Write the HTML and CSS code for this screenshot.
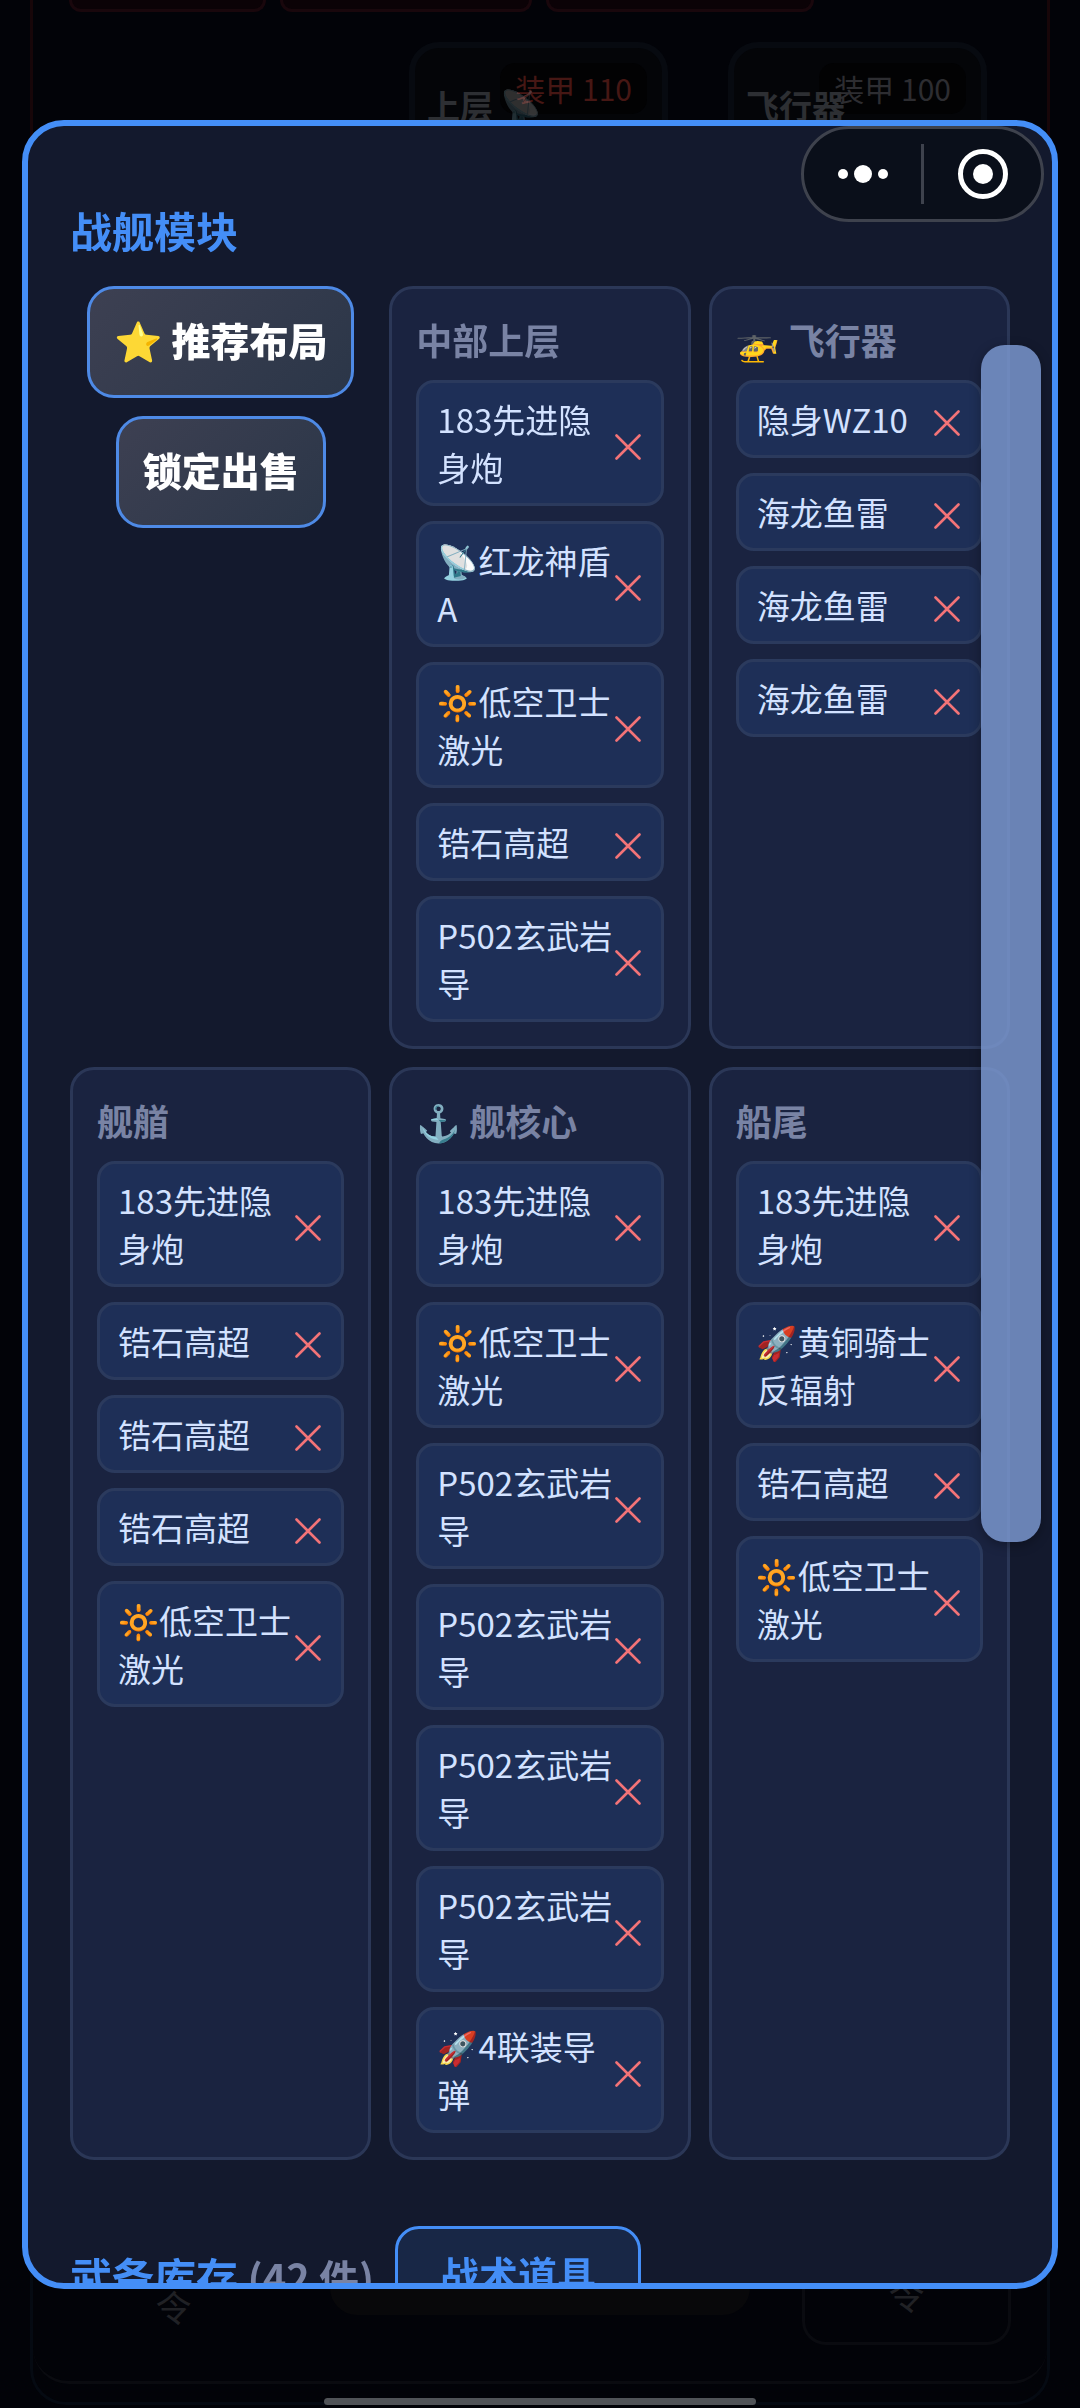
FILE: index.html
```html
<!DOCTYPE html>
<html lang="zh-CN">
<head>
	<meta charset="UTF-8">
	<meta name="viewport" content="width=device-width, initial-scale=1">
	<title>战舰模块</title>
	<link rel="stylesheet" href="styles.css">
</head>
<body>
	<svg class="defs" aria-hidden="true">
		<symbol id="i-x" viewBox="0 0 26 26">
			<path d="M1.5 1.5 24.5 24.5M24.5 1.5 1.5 24.5" fill="none" stroke="currentColor" stroke-width="2.6" stroke-linecap="round"/>
		</symbol>
	</svg>

	<!-- 战斗页面（被遮罩压暗） -->
	<div class="battle">
		<div class="enemy">
			<div class="chips"><span class="chip chip-s"></span><span class="chip chip-m"></span><span class="chip chip-l"></span></div>
			<div class="parts">
				<div class="part"><span class="armor hurt">装甲 110</span><b>上层 <span class="dim">📡</span></b></div>
				<div class="part"><span class="armor">装甲 100</span><b>飞行器</b></div>
			</div>
		</div>
		<div class="fleet">
			<div class="orders">
				<span class="order">令</span>
				<span class="order-mid"></span>
				<span class="order order-box">令</span>
			</div>
		</div>
	</div>

	<!-- 弹窗 -->
	<div class="mask">
		<div class="modal">
			<h2 class="title">战舰模块</h2>
			<div class="grid">
				<div class="actions">
					<button class="btn">⭐ 推荐布局</button>
					<button class="btn">锁定出售</button>
				</div>
				<div class="slot">
					<h3>中部上层</h3>
					<ul>
						<li><span>183先进隐身炮</span><button class="del" aria-label="移除"><svg><use href="#i-x"/></svg></button></li>
						<li><span>📡红龙神盾A</span><button class="del" aria-label="移除"><svg><use href="#i-x"/></svg></button></li>
						<li><span>🔆低空卫士激光</span><button class="del" aria-label="移除"><svg><use href="#i-x"/></svg></button></li>
						<li><span>锆石高超</span><button class="del" aria-label="移除"><svg><use href="#i-x"/></svg></button></li>
						<li><span>P502玄武岩导</span><button class="del" aria-label="移除"><svg><use href="#i-x"/></svg></button></li>
					</ul>
				</div>
				<div class="slot">
					<h3>🚁 飞行器</h3>
					<ul>
						<li><span>隐身WZ10</span><button class="del" aria-label="移除"><svg><use href="#i-x"/></svg></button></li>
						<li><span>海龙鱼雷</span><button class="del" aria-label="移除"><svg><use href="#i-x"/></svg></button></li>
						<li><span>海龙鱼雷</span><button class="del" aria-label="移除"><svg><use href="#i-x"/></svg></button></li>
						<li><span>海龙鱼雷</span><button class="del" aria-label="移除"><svg><use href="#i-x"/></svg></button></li>
					</ul>
				</div>
				<div class="slot">
					<h3>舰艏</h3>
					<ul>
						<li><span>183先进隐身炮</span><button class="del" aria-label="移除"><svg><use href="#i-x"/></svg></button></li>
						<li><span>锆石高超</span><button class="del" aria-label="移除"><svg><use href="#i-x"/></svg></button></li>
						<li><span>锆石高超</span><button class="del" aria-label="移除"><svg><use href="#i-x"/></svg></button></li>
						<li><span>锆石高超</span><button class="del" aria-label="移除"><svg><use href="#i-x"/></svg></button></li>
						<li><span>🔆低空卫士激光</span><button class="del" aria-label="移除"><svg><use href="#i-x"/></svg></button></li>
					</ul>
				</div>
				<div class="slot">
					<h3>⚓ 舰核心</h3>
					<ul>
						<li><span>183先进隐身炮</span><button class="del" aria-label="移除"><svg><use href="#i-x"/></svg></button></li>
						<li><span>🔆低空卫士激光</span><button class="del" aria-label="移除"><svg><use href="#i-x"/></svg></button></li>
						<li><span>P502玄武岩导</span><button class="del" aria-label="移除"><svg><use href="#i-x"/></svg></button></li>
						<li><span>P502玄武岩导</span><button class="del" aria-label="移除"><svg><use href="#i-x"/></svg></button></li>
						<li><span>P502玄武岩导</span><button class="del" aria-label="移除"><svg><use href="#i-x"/></svg></button></li>
						<li><span>P502玄武岩导</span><button class="del" aria-label="移除"><svg><use href="#i-x"/></svg></button></li>
						<li><span>🚀4联装导弹</span><button class="del" aria-label="移除"><svg><use href="#i-x"/></svg></button></li>
					</ul>
				</div>
				<div class="slot">
					<h3>船尾</h3>
					<ul>
						<li><span>183先进隐身炮</span><button class="del" aria-label="移除"><svg><use href="#i-x"/></svg></button></li>
						<li><span>🚀黄铜骑士反辐射</span><button class="del" aria-label="移除"><svg><use href="#i-x"/></svg></button></li>
						<li><span>锆石高超</span><button class="del" aria-label="移除"><svg><use href="#i-x"/></svg></button></li>
						<li><span>🔆低空卫士激光</span><button class="del" aria-label="移除"><svg><use href="#i-x"/></svg></button></li>
					</ul>
				</div>
			</div>
			<div class="stock">
				<h2>武备库存 <small>(42 件)</small></h2>
				<button class="tab">战术道具</button>
			</div>
			<div class="thumb"></div>
			<div class="capsule">
				<button aria-label="更多">
					<svg width="52" height="52" viewBox="0 0 52 52" fill="#fff"><circle cx="6" cy="26" r="5"/><circle cx="26" cy="26" r="9"/><circle cx="46" cy="26" r="5"/></svg>
				</button>
				<i></i>
				<button aria-label="关闭">
					<svg width="52" height="52" viewBox="0 0 52 52" fill="#fff"><circle cx="26" cy="26" r="22.5" fill="none" stroke="#fff" stroke-width="5"/><circle cx="26" cy="26" r="10"/></svg>
				</button>
			</div>
		</div>
	</div>
	<div class="home"></div>
</body>
</html>
```
FILE: styles.css
```css
* {
	box-sizing: border-box;
}
body, h2, h3, ul {
	margin: 0;
	padding: 0;
}
body {
	font: 33px/48px "Noto Sans CJK SC", "Noto Color Emoji", sans-serif;
	color: #d3e2ff;
	background: #020308;
}
ul {
	list-style-type: none;
}
button {
	font-family: inherit;
	cursor: pointer;
}
.defs {
	position: absolute;
	width: 0;
	height: 0;
}

/* 底层页面 */
.battle {
	display: flex;
	flex-direction: column;
	justify-content: space-between;
	height: 100vh;
	padding: 0 30px 3px;
	overflow: hidden;
}
.enemy {
	height: 50vh;
	padding: 0 36px;
	border: solid #170609;
	border-width: 0 3px;
}
.chips {
	display: flex;
	gap: 14px;
	height: 12px;
}
.chip {
	background: #0b0206;
	border: 3px solid #19070c;
	border-top: 0;
	border-radius: 0 0 18px 18px;
}
.chip-s {
	width: 197px;
}
.chip-m {
	width: 252px;
}
.chip-l {
	width: 268px;
}
.parts {
	display: flex;
	justify-content: flex-end;
	gap: 60px;
	margin-top: 30px;
	padding-right: 24px;
}
.part {
	position: relative;
	width: 259px;
	height: 180px;
	padding: 33px 12px;
	border: 6px solid #070a10;
	border-radius: 30px;
	background: #040508;
}
.part b {
	position: relative;
	color: #2d2f33;
}
.dim {
	opacity: .2;
}
.armor {
	position: absolute;
	top: 15px;
	right: 15px;
	padding: 0 15px;
	font-size: 30px;
	line-height: 51px;
	border-radius: 15px;
	background: #020203;
	color: #2d2d31;
}
.armor.hurt {
	color: #461714;
}
.fleet {
	height: 40vh;
	padding-bottom: 18px;
	border: 3px solid #050a12;
	border-top: 0;
	border-radius: 0 0 36px 36px;
}
.orders {
	display: flex;
	align-items: flex-end;
	justify-content: space-between;
	height: 100%;
	padding: 0 36px 36px;
	border-bottom: 3px solid #0a0b10;
	border-radius: 0 0 36px 36px;
}
.order {
	width: 209px;
	height: 120px;
	padding-top: 57px;
	text-align: center;
	font-size: 36px;
	color: #202125;
}
.order-box {
	padding-top: 42px;
	border: 3px solid #0a0b10;
	border-radius: 24px;
}
.order-mid {
	width: 420px;
	height: 150px;
	margin-bottom: 30px;
	border-radius: 27px;
	background: #08080a;
}

/* 弹窗 */
.mask {
	position: fixed;
	inset: 0;
	display: flex;
	padding: 120px 22px 119px;
}
.modal {
	position: relative;
	flex: 1;
	min-width: 0;
	padding: 74px 42px 0;
	overflow: hidden;
	background: #13192d;
	border: 6px solid #448ef7;
	border-radius: 42px;
}
.title, .stock h2 {
	font-size: 42px;
	line-height: 60px;
	color: #448ef7;
}
.title {
	margin-bottom: 26px;
}
.grid {
	display: grid;
	grid-template-columns: repeat(3, minmax(0, 1fr));
	gap: 18px;
}
.actions {
	display: flex;
	flex-direction: column;
	align-items: center;
	gap: 18px;
}
.btn {
	padding: 21px 24px 27px;
	font-size: 39px;
	font-weight: 900;
	line-height: 58px;
	white-space: nowrap;
	color: #fff;
	background: linear-gradient(135deg, #3d4052, #2b3648);
	border: 3px solid #4e8ae6;
	border-radius: 27px;
}
.slot {
	padding: 24px;
	background: #1a2340;
	border: 3px solid #2b3757;
	border-radius: 24px;
}
.slot h3 {
	margin-bottom: 15px;
	font-size: 36px;
	line-height: 52px;
	color: #7983a4;
}
.slot ul {
	display: flex;
	flex-direction: column;
	gap: 15px;
}
.slot li {
	display: flex;
	align-items: center;
	padding: 12px 15px 12px 18px;
	background: #1e2f57;
	border: 3px solid #2b3a5d;
	border-radius: 18px;
}
.slot li span {
	flex: 1;
	min-width: 0;
	word-break: break-all;
}
.del {
	display: flex;
	width: 32px;
	padding: 7px 5px 0 1px;
	border: 0;
	background: none;
	color: #f37377;
}
.del svg {
	width: 26px;
	height: 26px;
}
.stock {
	display: flex;
	align-items: center;
	gap: 21px;
	margin-top: 66px;
}
.stock small {
	font-size: 40px;
	color: #7983a4;
}
.tab {
	padding: 15px 42px 21px;
	font-size: 39px;
	font-weight: 700;
	line-height: 58px;
	color: #448ef7;
	background: #182746;
	border: 3px solid #448ef7;
	border-radius: 24px;
}

/* 滚动条滑块 */
.thumb {
	position: absolute;
	top: 219px;
	right: 11px;
	width: 60px;
	height: 1197px;
	border-radius: 24px;
	background: rgba(122, 151, 206, .85);
	box-shadow: 0 3px 12px rgba(0, 0, 0, .3);
}

/* 小程序胶囊按钮 */
.capsule {
	position: absolute;
	top: 0;
	right: 8px;
	display: flex;
	align-items: center;
	width: 243px;
	height: 96px;
	background: #0a0f1a;
	border: 3px solid #3e424d;
	border-radius: 48px;
}
.capsule button {
	flex: 1;
	display: flex;
	justify-content: center;
	padding: 0;
	border: 0;
	background: none;
}
.capsule i {
	width: 3px;
	height: 60px;
	background: #3e424d;
}
.home {
	position: fixed;
	bottom: 3px;
	left: 30%;
	right: 30%;
	height: 7px;
	border-radius: 4px;
	background: #505357;
}
```
